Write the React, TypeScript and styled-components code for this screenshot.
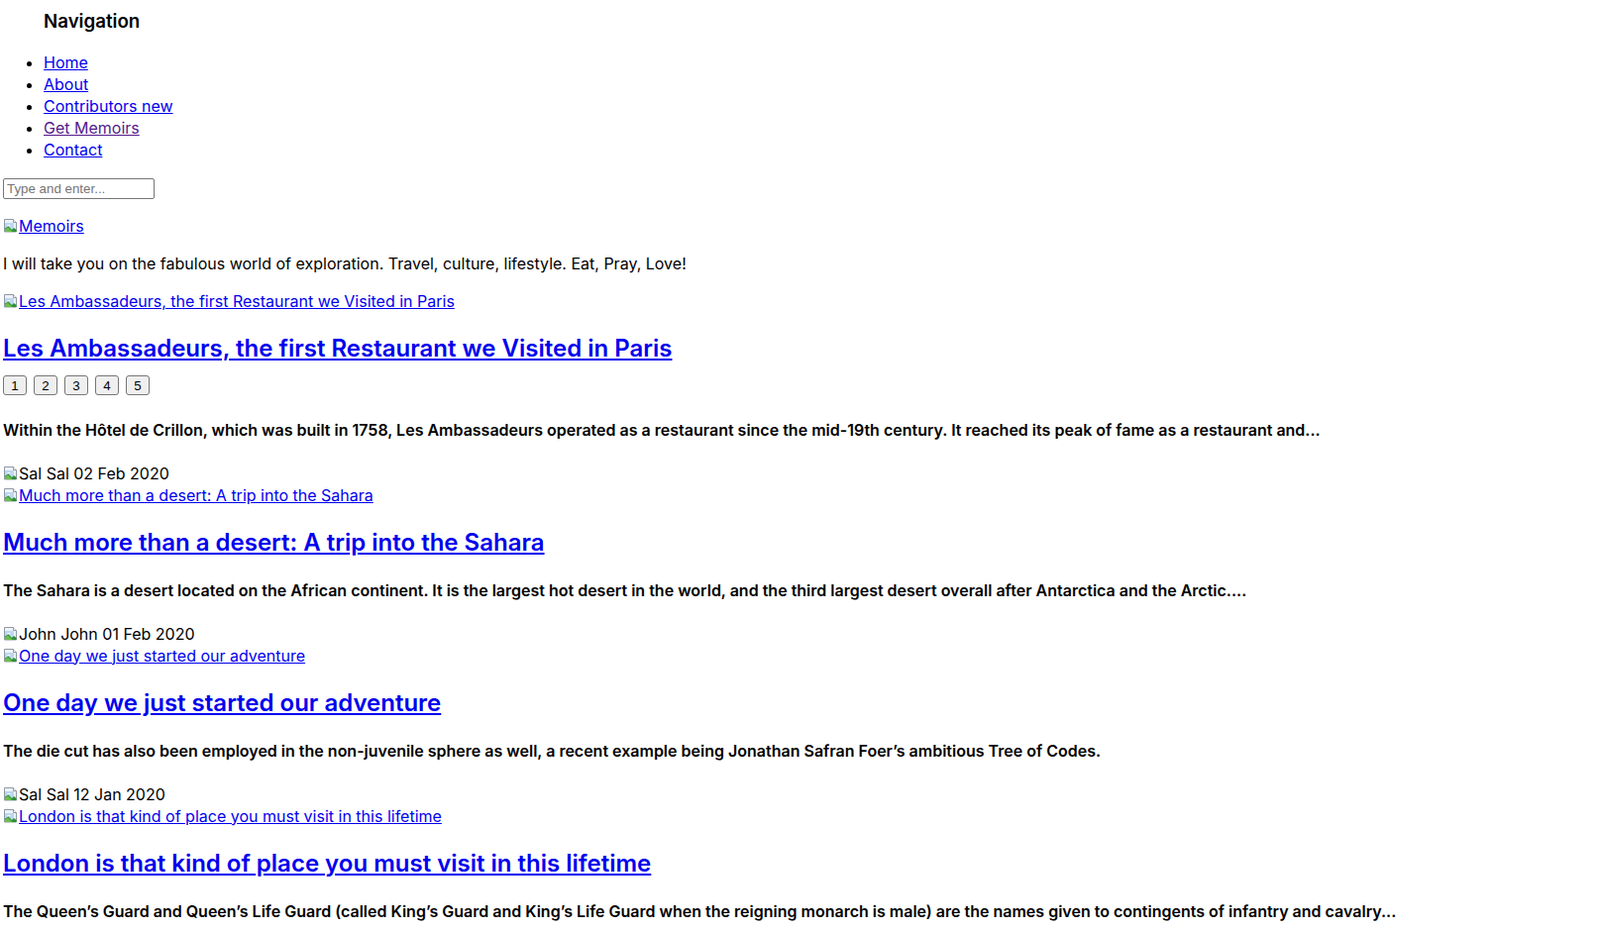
import React from "react";
import styled, { createGlobalStyle } from "styled-components";

const GlobalStyle = createGlobalStyle`
  html, body { margin: 0; padding: 0; background: #fff; }
  body {
    font-family: Inter, "Liberation Sans", Arial, sans-serif;
    font-size: 16px;
    line-height: 22px;
    color: #000;
  }
`;

const Page = styled.div`
  padding: 0 3px;
`;

const NavTitle = styled.h3`
  margin: 9px 0 0 41px;
  font-size: 18.72px;
  line-height: 26px;
  font-weight: 600;
`;

const NavList = styled.ul`
  margin: 17px 0 0;
  padding-left: 41px;
  list-style: disc;
`;

const NavItem = styled.li`
  line-height: 22px;
`;

const Link = styled.a<{ $visited?: boolean }>`
  color: ${(p) => (p.$visited ? "#551a8b" : "#0000ee")};
  text-decoration: underline;
  cursor: pointer;
`;

const SearchInput = styled.input`
  display: block;
  margin-top: 18px;
  width: 153px;
  height: 21px;
  box-sizing: border-box;
  border: 1px solid #767676;
  border-radius: 2px;
  padding: 1px 3px;
  font-family: "Liberation Sans", Arial, sans-serif;
  font-size: 13.33px;
  color: #000;
  &::placeholder { color: #757575; }
`;

const Line = styled.div<{ $top?: number }>`
  line-height: 22px;
  margin-top: ${(p) => p.$top ?? 0}px;
`;

const Intro = styled.p`
  margin: 16px 0;
`;

const Title = styled.h2`
  margin: 20px 0;
  font-size: 24px;
  line-height: 34px;
  font-weight: 600;
`;

const Rating = styled.div`
  display: flex;
  gap: 7px;
  align-items: center;
  height: 22px;
  margin: -11px 0 23px;
`;

const RateButton = styled.button`
  width: 24px;
  height: 20px;
  box-sizing: border-box;
  padding: 0;
  border: 1px solid #767676;
  border-radius: 3px;
  background: #efefef;
  font-family: "Liberation Sans", Arial, sans-serif;
  font-size: 13.33px;
  color: #000;
`;

const Excerpt = styled.p`
  margin: 20.5px 0 21.5px;
  font-weight: 600;
`;

const IconWrap = styled.span`
  display: inline-block;
  width: 16px;
  height: 16px;
  vertical-align: -2px;
`;

const BrokenImage = () => (
  <IconWrap>
    <svg width="16" height="16" viewBox="0 0 16 16">
      <path d="M1.5 1.5h9l3 3v9.5h-12z" fill="#eef3f8" stroke="#8f99a4" />
      <path d="M10.5 1.5v3h3" fill="#fff" stroke="#8f99a4" />
      <path d="M2 5h9v8H2z" fill="#bcd7f0" />
      <path d="M4 8c1-1.3 3-1.3 3.8 0z" fill="#fff" />
      <path d="M2 14V10.5l3.5-2 3.5 3.5L11 10l2.5 2V14z" fill="#2f8f35" />
      <path d="M2 14v-2.5l3-2 4.5 4.5z" fill="#6cc04a" />
    </svg>
  </IconWrap>
);

type Post = {
  title: string;
  excerpt: string;
  author: string;
  date: string;
  rating?: boolean;
};

const posts: Post[] = [
  {
    title: "Les Ambassadeurs, the first Restaurant we Visited in Paris",
    excerpt:
      "Within the Hôtel de Crillon, which was built in 1758, Les Ambassadeurs operated as a restaurant since the mid-19th century. It reached its peak of fame as a restaurant and...",
    author: "Sal",
    date: "02 Feb 2020",
    rating: true,
  },
  {
    title: "Much more than a desert: A trip into the Sahara",
    excerpt:
      "The Sahara is a desert located on the African continent. It is the largest hot desert in the world, and the third largest desert overall after Antarctica and the Arctic....",
    author: "John",
    date: "01 Feb 2020",
  },
  {
    title: "One day we just started our adventure",
    excerpt:
      "The die cut has also been employed in the non-juvenile sphere as well, a recent example being Jonathan Safran Foer’s ambitious Tree of Codes.",
    author: "Sal",
    date: "12 Jan 2020",
  },
  {
    title: "London is that kind of place you must visit in this lifetime",
    excerpt:
      "The Queen’s Guard and Queen’s Life Guard (called King’s Guard and King’s Life Guard when the reigning monarch is male) are the names given to contingents of infantry and cavalry...",
    author: "Sal",
    date: "10 Jan 2020",
  },
];

const navItems = ["Home", "About", "Contributors new", "Get Memoirs", "Contact"];

export default function App() {
  return (
    <>
      <GlobalStyle />
      <Page>
        <NavTitle>Navigation</NavTitle>
        <NavList>
          {navItems.map((n) => (
            <NavItem key={n}>
              <Link $visited={n === "Get Memoirs"}>{n}</Link>
            </NavItem>
          ))}
        </NavList>
        <SearchInput placeholder="Type and enter..." />
        <Line $top={16}>
          <Link>
            <BrokenImage />
            Memoirs
          </Link>
        </Line>
        <Intro>
          I will take you on the fabulous world of exploration. Travel, culture,
          lifestyle. Eat, Pray, Love!
        </Intro>
        {posts.map((p) => (
          <article key={p.title}>
            <Line>
              <Link>
                <BrokenImage />
                {p.title}
              </Link>
            </Line>
            <Title>
              <Link>{p.title}</Link>
            </Title>
            {p.rating && (
              <Rating>
                {[1, 2, 3, 4, 5].map((r) => (
                  <RateButton key={r}>{r}</RateButton>
                ))}
              </Rating>
            )}
            <Excerpt>{p.excerpt}</Excerpt>
            <Line>
              <BrokenImage />
              {p.author} {p.author} {p.date}
            </Line>
          </article>
        ))}
      </Page>
    </>
  );
}
